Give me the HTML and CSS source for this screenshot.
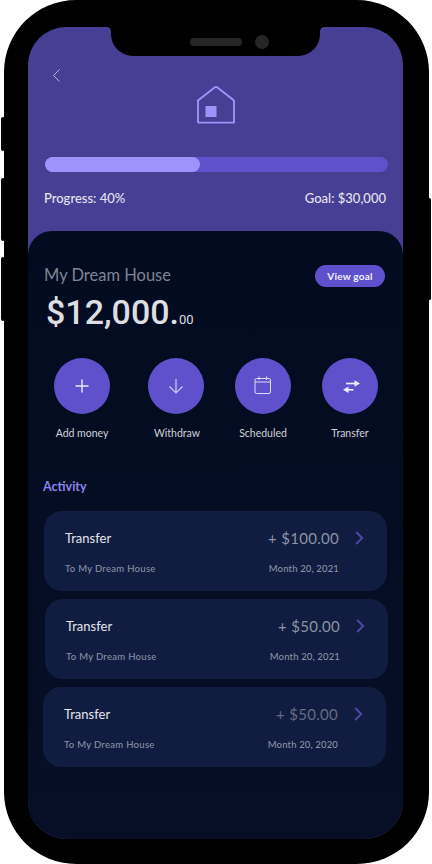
FILE: index.html
```html
<html>
  <head>
    <link rel="stylesheet" href="styles.css">
  </head>
  <body>
    <div class='phone'>
      <span class='sideBtn sideBtnA'></span>
      <span class='sideBtn sideBtnB'></span>
      <span class='sideBtn sideBtnC'></span>
      <span class='sideBtn sideBtnR'></span>
      <div class='screen'>
        <div class='notch'>
          <span class='speaker'></span>
          <span class='camera'></span>
        </div>
        <div class='header'>
          <svg class='backIcon' width='8' height='13' viewBox='0 0 8 13'>
            <path d='M7.5 0.5 L1.5 6.5 L7.5 12.5' fill='none' stroke='#b6b2dc' stroke-width='1'/>
          </svg>
          <svg class='homeIcon' width='38' height='38' viewBox='0 0 38 38'>
            <path d='M1 14.5 L17.6 1.4 Q19 0.6 20.4 1.4 L36.4 14 Q37 14.6 37 16 L37 36.6 L1.6 36.6 L1 36 Z' fill='none' stroke='#9d94fb' stroke-width='1.9' stroke-linejoin='round'/>
            <rect x='8.5' y='20' width='11' height='11' fill='#9d94fb'/>
          </svg>
          <div class='bar'><div class='barFill' style='width: 45.2%'></div></div>
          <div class='progressRow'>
            <span>Progress: 40%</span>
            <span>Goal: $30,000</span>
          </div>
        </div>
        <div class='sheet'>
          <div class='titleRow'>
            <span class='goalName'>My Dream House</span>
            <span class='viewGoal'>View goal</span>
          </div>
          <div class='amount'>$12,000.<span class='cents'>00</span></div>
          <div class='actions'>
            <div class='action actionFirst'>
              <div class='circle'>
                <svg width='16' height='16' viewBox='0 0 16 16'>
                  <path d='M8 1.5 V14.5 M1.5 8 H14.5' stroke='#e9e8f8' stroke-width='1.4' fill='none'/>
                </svg>
              </div>
              <span class='actionLabel'>Add money</span>
            </div>
            <div class='action'>
              <div class='circle'>
                <svg width='16' height='16' viewBox='0 0 16 16'>
                  <path d='M8 1 V15 M1.5 8.5 L8 15 L14.5 8.5' stroke='#cfcbee' stroke-width='1.2' fill='none'/>
                </svg>
              </div>
              <span class='actionLabel actionLabelNudge'>Withdraw</span>
            </div>
            <div class='action'>
              <div class='circle'>
                <svg class='calendarIcon' width='18' height='18' viewBox='0 0 18 18'>
                  <rect x='1' y='2.5' width='15.5' height='15' rx='1.5' stroke='#dcdaf4' stroke-width='1' fill='none'/>
                  <path d='M1 6 H16.5 M5 0.5 V4 M12.5 0.5 V4' stroke='#dcdaf4' stroke-width='1' fill='none'/>
                </svg>
              </div>
              <span class='actionLabel'>Scheduled</span>
            </div>
            <div class='action'>
              <div class='circle'>
                <svg class='transferIcon' width='18' height='13' viewBox='0 0 18 13'>
                  <path d='M4 3.5 H14' stroke='#eceaf8' stroke-width='1.7' fill='none'/>
                  <path d='M12.5 0.2 L18 3.5 L12.5 6.8 Z' fill='#eceaf8'/>
                  <path d='M11.5 9.8 H5' stroke='#eceaf8' stroke-width='1.7' fill='none'/>
                  <path d='M6.5 6.5 L1 9.8 L6.5 13 Z' fill='#eceaf8'/>
                </svg>
              </div>
              <span class='actionLabel'>Transfer</span>
            </div>
          </div>
          <div class='activityTitle'>Activity</div>
          <div class='card'>
            <span class='cardTitle'>Transfer</span>
            <span class='cardAmount'>+ $100.00</span>
            <svg class='cardArrow' width='9' height='14' viewBox='0 0 9 14'><path d='M1.2 1 L7.2 7 L1.2 13' fill='none' stroke='#4a49ab' stroke-width='2'/></svg>
            <span class='cardSub'>To My Dream House</span>
            <span class='cardDate'>Month 20, 2021</span>
          </div>
          <div class='card cardShiftR'>
            <span class='cardTitle'>Transfer</span>
            <span class='cardAmount'>+ $50.00</span>
            <svg class='cardArrow' width='9' height='14' viewBox='0 0 9 14'><path d='M1.2 1 L7.2 7 L1.2 13' fill='none' stroke='#4a49ab' stroke-width='2'/></svg>
            <span class='cardSub'>To My Dream House</span>
            <span class='cardDate'>Month 20, 2021</span>
          </div>
          <div class='card cardShiftL'>
            <span class='cardTitle'>Transfer</span>
            <span class='cardAmount cardAmountDim'>+ $50.00</span>
            <svg class='cardArrow' width='9' height='14' viewBox='0 0 9 14'><path d='M1.2 1 L7.2 7 L1.2 13' fill='none' stroke='#4a49ab' stroke-width='2'/></svg>
            <span class='cardSub'>To My Dream House</span>
            <span class='cardDate'>Month 20, 2020</span>
          </div>
        </div>
      </div>
    </div>
  </body>
</html>
```

FILE: styles.css
```css
body{
  margin: 0;
  background-color: #fff;
  font-family: "Lato", "Open Sans", sans-serif;
}
.phone{
  position: relative;
  box-sizing: border-box;
  width: 425px;
  height: 864px;
  margin-left: 4px;
  padding: 27px 26px 25px 24px;
  background-color: #000;
  border-radius: 72px;
}
.sideBtn{
  position: absolute;
  width: 4px;
  background-color: #000;
  border-radius: 2px;
}
.sideBtnA{ left: -3px; top: 117px; height: 34px; }
.sideBtnB{ left: -3px; top: 178px; height: 63px; }
.sideBtnC{ left: -3px; top: 257px; height: 64px; }
.sideBtnR{ right: -2px; top: 198px; height: 102px; width: 3px; }
.screen{
  position: relative;
  display: flex;
  flex-direction: column;
  height: 812px;
  background-color: #463f94;
  border-radius: 38px;
  overflow: hidden;
}
.notch{
  position: absolute;
  left: 83px;
  top: 0;
  width: 209px;
  height: 29px;
  display: flex;
  align-items: center;
  justify-content: center;
  gap: 13px;
  background-color: #000;
  border-radius: 0 0 22px 22px;
}
.notch::before, .notch::after{
  content: '';
  position: absolute;
  top: 0;
  width: 4px;
  height: 4px;
}
.notch::before{
  left: -4px;
  background: radial-gradient(circle at 0 100%, transparent 3.5px, #000 4px);
}
.notch::after{
  right: -4px;
  background: radial-gradient(circle at 100% 100%, transparent 3.5px, #000 4px);
}
.speaker{
  width: 52px;
  height: 8px;
  margin-left: 28px;
  background-color: #262626;
  border-radius: 4px;
}
.camera{
  width: 14px;
  height: 14px;
  background-color: #262626;
  border-radius: 50%;
}
.header{
  display: flex;
  flex-direction: column;
  height: 204px;
  flex-shrink: 0;
  box-sizing: border-box;
  padding: 42px 15px 0 17px;
}
.backIcon{
  margin-left: 7px;
}
.homeIcon{
  margin: 4px 0 0 152px;
}
.bar{
  height: 15px;
  margin-top: 33px;
  background-color: #5e51c9;
  border-radius: 8px;
}
.barFill{
  height: 100%;
  background-color: #9d94fb;
  border-radius: 8px;
}
.progressRow{
  display: flex;
  justify-content: space-between;
  margin: 18px 0 0 -1px;
  padding-right: 2px;
  font-size: 13px;
  font-weight: 500;
  line-height: 16px;
  color: #e4e2f0;
}
.sheet{
  flex: 1;
  padding-top: 34px;
  background: linear-gradient(#030b20, #060f26);
  border-radius: 24px 24px 0 0;
}
.titleRow{
  display: flex;
  justify-content: space-between;
  align-items: center;
  padding: 0 18px 0 16px;
}
.goalName{
  margin-bottom: 2px;
  font-size: 16.5px;
  color: #7f8494;
}
.viewGoal{
  width: 70px;
  height: 22px;
  line-height: 22px;
  text-align: center;
  font-size: 10px;
  font-weight: 700;
  letter-spacing: 0.2px;
  color: #f0effa;
  background-color: #5f51cb;
  border-radius: 11px;
}
.amount{
  margin: 5px 0 0 18px;
  font-family: "Roboto", sans-serif;
  font-weight: 500;
  font-size: 34px;
  line-height: 40px;
  color: #dcdee2;
}
.cents{
  font-size: 13px;
  font-weight: 400;
}
.actions{
  display: flex;
  gap: 31px;
  margin-top: 18px;
  padding-left: 26px;
}
.action{
  display: flex;
  flex-direction: column;
  align-items: center;
  width: 56px;
}
.actionFirst{
  margin-right: 7px;
}
.circle{
  display: flex;
  align-items: center;
  justify-content: center;
  width: 56px;
  height: 56px;
  flex-shrink: 0;
  background-color: #5f51cb;
  border-radius: 50%;
}
.calendarIcon{
  margin-bottom: 2px;
}
.transferIcon{
  margin-left: 2px;
}
.actionLabel{
  margin-top: 12px;
  font-size: 10.5px;
  line-height: 14px;
  color: #cfd1d8;
  white-space: nowrap;
}
.actionLabelNudge{
  margin-left: 2px;
}
.activityTitle{
  margin: 39px 0 16px 15px;
  font-size: 12.5px;
  font-weight: 700;
  line-height: 16px;
  color: #8c83ee;
}
.card{
  display: grid;
  grid-template-columns: 1fr auto 16px;
  grid-template-rows: 20px 12px;
  row-gap: 14px;
  column-gap: 16px;
  align-items: center;
  box-sizing: border-box;
  width: 343px;
  height: 80px;
  margin: 0 0 8px 16px;
  padding: 17px 16px 0 21px;
  background-color: #101d40;
  border-radius: 18px;
}
.cardShiftR{
  margin-left: 17px;
}
.cardShiftL{
  margin-left: 15px;
}
.cardTitle{
  font-size: 13px;
  color: #e3e5ec;
}
.cardAmount{
  justify-self: end;
  font-size: 15px;
  letter-spacing: 0.3px;
  color: #8d92a5;
}
.cardAmountDim{
  color: #666c82;
}
.cardSub, .cardDate{
  font-size: 9.5px;
  font-weight: 500;
  letter-spacing: 0.3px;
  color: #8a8fa6;
}
.cardDate{
  justify-self: end;
  letter-spacing: 0.15px;
}
```
